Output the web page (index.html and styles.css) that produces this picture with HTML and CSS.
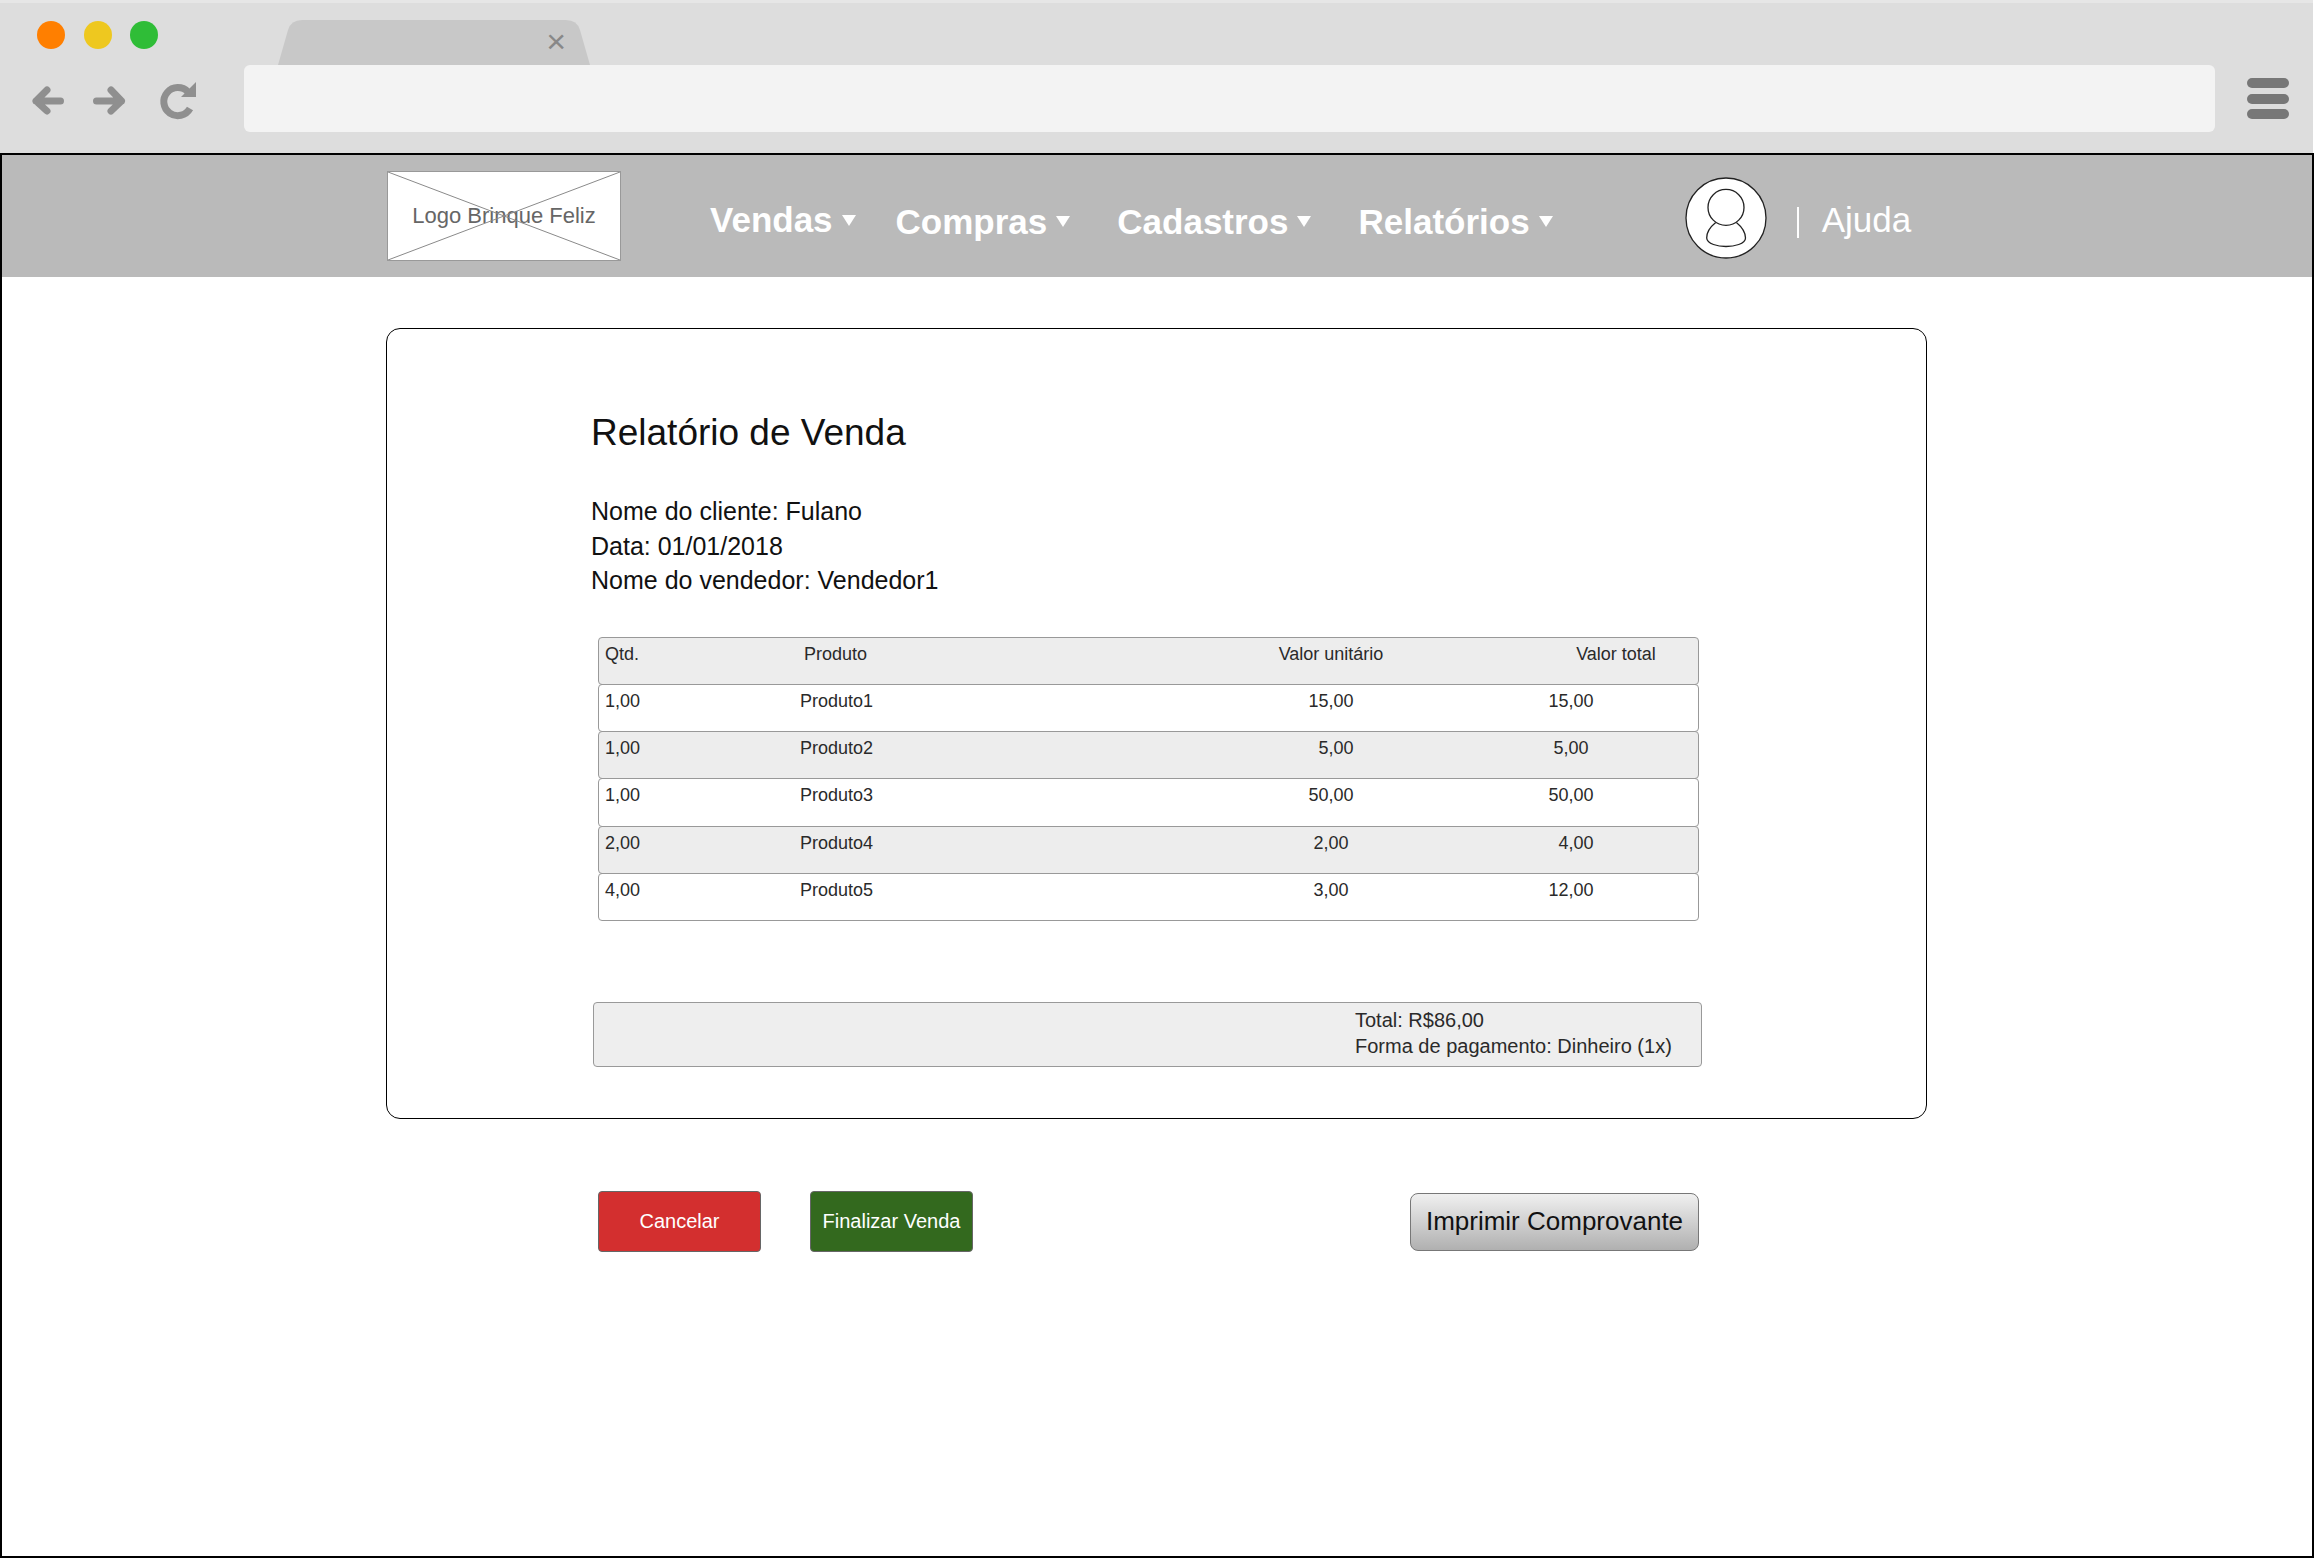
FILE: index.html
```html
<!DOCTYPE html>
<html lang="pt-BR">
<head>
    <meta charset="UTF-8">
    <title>Relatório de Venda</title>
    <link rel="stylesheet" href="styles.css">
</head>
<body>
    <div class="chrome">
        <div class="chrome-top">
            <span class="dot dot-orange"></span>
            <span class="dot dot-yellow"></span>
            <span class="dot dot-green"></span>
            <div class="tab"><span class="tab-close">×</span></div>
        </div>
        <div class="chrome-bar">
            <svg class="chrome-icons" width="172" height="44" viewBox="0 0 172 44">
                <g fill="none" stroke="#8f8f8f" stroke-width="7" stroke-linecap="round" stroke-linejoin="round">
                    <path d="M32.5 21H8M19 10L8 21L19 31"/>
                    <path d="M68.5 21H93.5M83 10L93.5 21L83 31"/>
                    <path d="M160 12A14 14 0 1 0 162 28.5" stroke-linecap="butt"/>
                </g>
                <path d="M168 2V17H153Z" fill="#8f8f8f"/>
            </svg>
            <div class="address"></div>
            <div class="burger"><span></span><span></span><span></span></div>
        </div>
    </div>

    <div class="frame">
        <nav class="topnav">
            <div class="logo">
                <svg class="logo-cross" viewBox="0 0 100 100" preserveAspectRatio="none">
                    <path d="M0 0L100 100M100 0L0 100" stroke="#8a8a8a" stroke-width="1" fill="none" vector-effect="non-scaling-stroke"/>
                </svg>
                Logo Brinque Feliz
            </div>
            <a class="menu menu-first">Vendas<i class="caret"></i></a>
            <a class="menu">Compras<i class="caret"></i></a>
            <a class="menu">Cadastros<i class="caret"></i></a>
            <a class="menu">Relatórios<i class="caret"></i></a>
            <svg class="avatar" width="82" height="82" viewBox="0 0 82 82">
                <g fill="#fff" stroke="#222" stroke-width="1.3">
                    <circle cx="41" cy="41" r="40"/>
                    <path d="M30.7 45.4C25 50 21.5 55 21.7 61C22 67 33 69.5 41 69.5C49 69.5 60.5 67 60.5 61C60.5 55 57 50 51.4 45.4"/>
                    <circle cx="41" cy="30.4" r="18"/>
                </g>
            </svg>
            <span class="pipe"></span>
            <a class="help">Ajuda</a>
        </nav>

        <main class="card">
            <h1>Relatório de Venda</h1>
            <div class="info">
                <div>Nome do cliente: Fulano</div>
                <div>Data: 01/01/2018</div>
                <div>Nome do vendedor: Vendedor1</div>
            </div>

            <div class="items">
                <div class="row row-head shaded">
                    <span>Qtd.</span>
                    <span class="head-product">Produto</span>
                    <span class="num">Valor unitário</span>
                    <span class="num head-total">Valor total</span>
                </div>
                <div class="row">
                    <span>1,00</span><span>Produto1</span>
                    <span class="num">15,00</span><span class="num col-total">15,00</span>
                </div>
                <div class="row shaded">
                    <span>1,00</span><span>Produto2</span>
                    <span class="num">&nbsp;&nbsp;5,00</span><span class="num col-total">5,00</span>
                </div>
                <div class="row">
                    <span>1,00</span><span>Produto3</span>
                    <span class="num">50,00</span><span class="num col-total">50,00</span>
                </div>
                <div class="row shaded">
                    <span>2,00</span><span>Produto4</span>
                    <span class="num">2,00</span><span class="num col-total">&nbsp;&nbsp;4,00</span>
                </div>
                <div class="row">
                    <span>4,00</span><span>Produto5</span>
                    <span class="num">3,00</span><span class="num col-total">12,00</span>
                </div>
            </div>

            <div class="summary">
                <div>Total: R$86,00</div>
                <div>Forma de pagamento: Dinheiro (1x)</div>
            </div>
        </main>

        <div class="actions">
            <button class="btn btn-cancel">Cancelar</button>
            <button class="btn btn-finish">Finalizar Venda</button>
            <button class="btn-print">Imprimir Comprovante</button>
        </div>
    </div>
</body>
</html>
```

FILE: styles.css
```css
* {
    box-sizing: border-box;
}
body {
    margin: 0;
    background-color: #fff;
    color: #2a2a2a;
    font-family: "Liberation Sans", Arial, sans-serif;
}

/* browser window */
.chrome {
    width: 2313px;
    height: 153px;
    background-color: #ddd;
    border-top: 3px solid #e6e6e6;
}
.chrome-top {
    display: flex;
    align-items: flex-start;
    height: 62px;
    padding: 17px 0 0 37px;
}
.dot {
    width: 28px;
    height: 28px;
    margin: 1px 18.5px 0 0;
    border-radius: 50%;
}
.dot-orange {
    background-color: #ff7f00;
}
.dot-yellow {
    background-color: #eec81f;
}
.dot-green {
    background-color: #2fbd37;
}
.tab {
    display: flex;
    justify-content: flex-end;
    width: 312px;
    height: 45px;
    margin-left: 101.5px;
    padding-right: 24px;
    background-color: #c8c8c8;
    clip-path: path("M0 45L10 10Q13 0 24 0H288Q299 0 302 10L312 45Z");
}
.tab-close {
    margin-top: 3px;
    color: #888;
    font-size: 34px;
    line-height: 36px;
}
.chrome-bar {
    display: flex;
    align-items: flex-start;
    padding-left: 28px;
}
.chrome-icons {
    margin-top: 15px;
}
.address {
    width: 1971px;
    height: 67px;
    margin-left: 44px;
    background-color: #f3f3f3;
    border-radius: 6px;
}
.burger {
    display: flex;
    flex-direction: column;
    gap: 5.5px;
    width: 42px;
    margin: 13px 0 0 32px;
}
.burger span {
    height: 10px;
    background-color: #777;
    border-radius: 5px;
}

/* page inside the window */
.frame {
    width: 2314px;
    height: 1405px;
    border: 2px solid #000;
    overflow: hidden;
}
.topnav {
    display: flex;
    align-items: center;
    height: 122px;
    padding-left: 385px;
    background-color: #bababa;
    color: #fff;
}
.logo {
    position: relative;
    display: flex;
    align-items: center;
    justify-content: center;
    width: 234px;
    height: 90px;
    margin-right: 89px;
    background-color: #fff;
    border: 1px solid #999;
    color: #666;
    font-size: 22px;
}
.logo-cross {
    position: absolute;
    top: 0;
    left: 0;
    width: 100%;
    height: 100%;
}
.menu {
    display: flex;
    align-items: center;
    gap: 9px;
    margin: 11px 47px 0 0;
    font-size: 35px;
    font-weight: bold;
}
.menu-first {
    margin: 8px 40px 0 0;
}
.caret {
    width: 0;
    height: 0;
    border-top: 11px solid #fff;
    border-left: 7px solid transparent;
    border-right: 7px solid transparent;
}
.avatar {
    margin: 3px 0 0 85px;
}
.pipe {
    width: 2px;
    height: 31px;
    margin: 13px 0 0 30px;
    background-color: #fff;
}
.help {
    margin: 8px 0 0 23px;
    font-size: 35px;
}

/* report card */
.card {
    width: 1541px;
    height: 791px;
    margin: 51px 0 0 384px;
    padding: 83px 0 0 204px;
    border: 1px solid #000;
    border-radius: 14px;
}
h1 {
    margin: 0 0 40px;
    color: #111;
    font-size: 37px;
    font-weight: normal;
    line-height: 42px;
}
.info {
    color: #111;
    font-size: 25px;
    line-height: 34.5px;
}
.items {
    width: 1101px;
    margin: 39.5px 0 0 7px;
}
.row {
    display: grid;
    grid-template-columns: 195px 431px 200px 260px;
    height: 48.17px;
    margin-bottom: -1px;
    padding: 6px 0 0 6px;
    border: 1px solid #999;
    border-radius: 4px;
    font-size: 18px;
    line-height: 21px;
}
.shaded {
    background-color: #ededed;
}
.head-product {
    padding-left: 4px;
}
.num {
    text-align: center;
}
.col-total {
    padding-left: 20px;
}
.head-total {
    padding-left: 110px;
}
.summary {
    width: 1109px;
    height: 65px;
    margin: 82px 0 0 2px;
    padding: 4px 0 0 761px;
    background-color: #eee;
    border: 1px solid #999;
    border-radius: 4px;
    font-size: 20px;
    line-height: 26px;
}

/* buttons under the card */
.actions {
    display: flex;
    align-items: center;
    width: 1697px;
    margin: 72px 0 0 596px;
    padding-right: 596px;
}
.btn {
    width: 163px;
    height: 61px;
    margin-right: 49px;
    padding: 0;
    border: 1px solid #666;
    border-radius: 4px;
    color: #fff;
    font-family: inherit;
    font-size: 20px;
}
.btn-cancel {
    background-color: #d32f2f;
}
.btn-finish {
    background-color: #33691e;
}
.btn-print {
    width: 289px;
    height: 58px;
    margin-left: auto;
    padding: 0;
    background: linear-gradient(#f0f0f0, #b0b0b0);
    border: 1px solid #777;
    border-radius: 8px;
    color: #111;
    font-family: inherit;
    font-size: 26px;
}
```
